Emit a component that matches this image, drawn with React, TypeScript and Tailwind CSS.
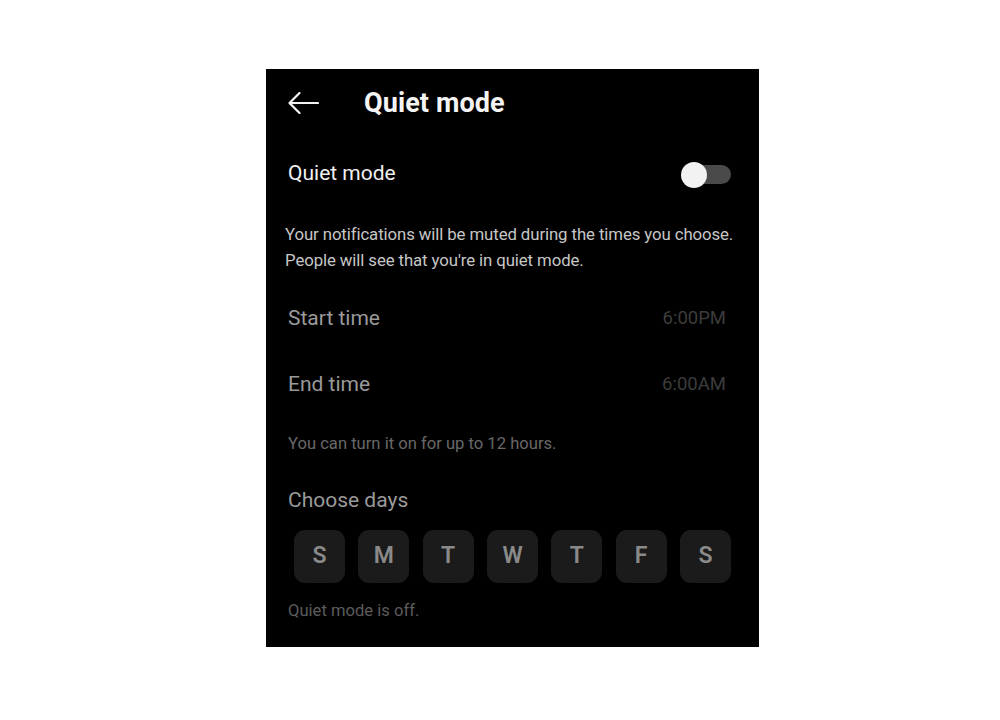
import React from "react";

const days = ["S", "M", "T", "W", "T", "F", "S"];

export default function App() {
  return (
    <div
      className="min-h-screen w-full bg-white pt-[69px] pl-[266px]"
      style={{ fontFamily: "Roboto, 'Noto Sans', sans-serif" }}
    >
      <div className="w-[493px] h-[578px] bg-black flex flex-col">
        {/* Header */}
        <div className="h-[66px] pt-[3px] flex items-center pl-[22px]">
          <svg width="31" height="22" viewBox="0 0 31 22" fill="none" className="shrink-0 mt-[-1px]">
            <path d="M30 11H1.5M11.5 1L1.5 11L11.5 21" stroke="#f2f2f2" strokeWidth="2.2" strokeLinecap="round" strokeLinejoin="round" />
          </svg>
          <div className="ml-[45px] text-[27px] leading-none font-bold text-[#f4f4f4] tracking-[0.1px]">Quiet mode</div>
        </div>

        {/* Toggle row */}
        <div className="h-[74px] pt-[4px] flex items-center justify-between pl-[22px] pr-[28px]">
          <div className="text-[21px] text-[#f0f0f0]">Quiet mode</div>
          <div className="relative w-[50px] h-[26px] mt-[1px]">
            <div className="absolute right-0 top-[3.5px] w-[38px] h-[19px] rounded-full bg-[#4a4a4a]" />
            <div className="absolute left-0 top-0 w-[26px] h-[26px] rounded-full bg-[#f2f2f2]" />
          </div>
        </div>

        {/* Description */}
        <div className="mt-[12px] pl-[19px] text-[16.8px] leading-[26px] text-[#c6c6c6] whitespace-nowrap tracking-[-0.1px]">
          <div>Your notifications will be muted during the times you choose.</div>
          <div>People will see that you're in quiet mode.</div>
        </div>

        {/* Times */}
        <div className="mt-[13px] flex flex-col">
          <div className="h-[65px] flex items-center justify-between pl-[22px] pr-[33px]">
            <div className="text-[21px] text-[#9a9a9a]">Start time</div>
            <div className="text-[18.5px] text-[#3c3c3c]">6:00PM</div>
          </div>
          <div className="h-[67px] flex items-center justify-between pl-[22px] pr-[33px]">
            <div className="text-[21px] text-[#9a9a9a]">End time</div>
            <div className="text-[18.5px] text-[#3c3c3c]">6:00AM</div>
          </div>
        </div>

        <div className="mt-[14px] pl-[22px] text-[16.6px] leading-[24px] text-[#686868]">
          You can turn it on for up to 12 hours.
        </div>

        <div className="mt-[30px] pl-[22px] text-[21px] leading-[28px] text-[#9a9a9a]">Choose days</div>

        <div className="mt-[16px] pl-[28px] pr-[28px] flex justify-between">
          {days.map((d, i) => (
            <div
              key={i}
              className="w-[51px] h-[53px] rounded-[11px] bg-[#1b1b1b] flex items-center justify-center text-[23px] font-semibold text-[#8a8a8a]"
            >
              {d}
            </div>
          ))}
        </div>

        <div className="mt-[16px] pl-[22px] text-[16.6px] leading-[24px] text-[#5c5c5c]">Quiet mode is off.</div>
      </div>
    </div>
  );
}
